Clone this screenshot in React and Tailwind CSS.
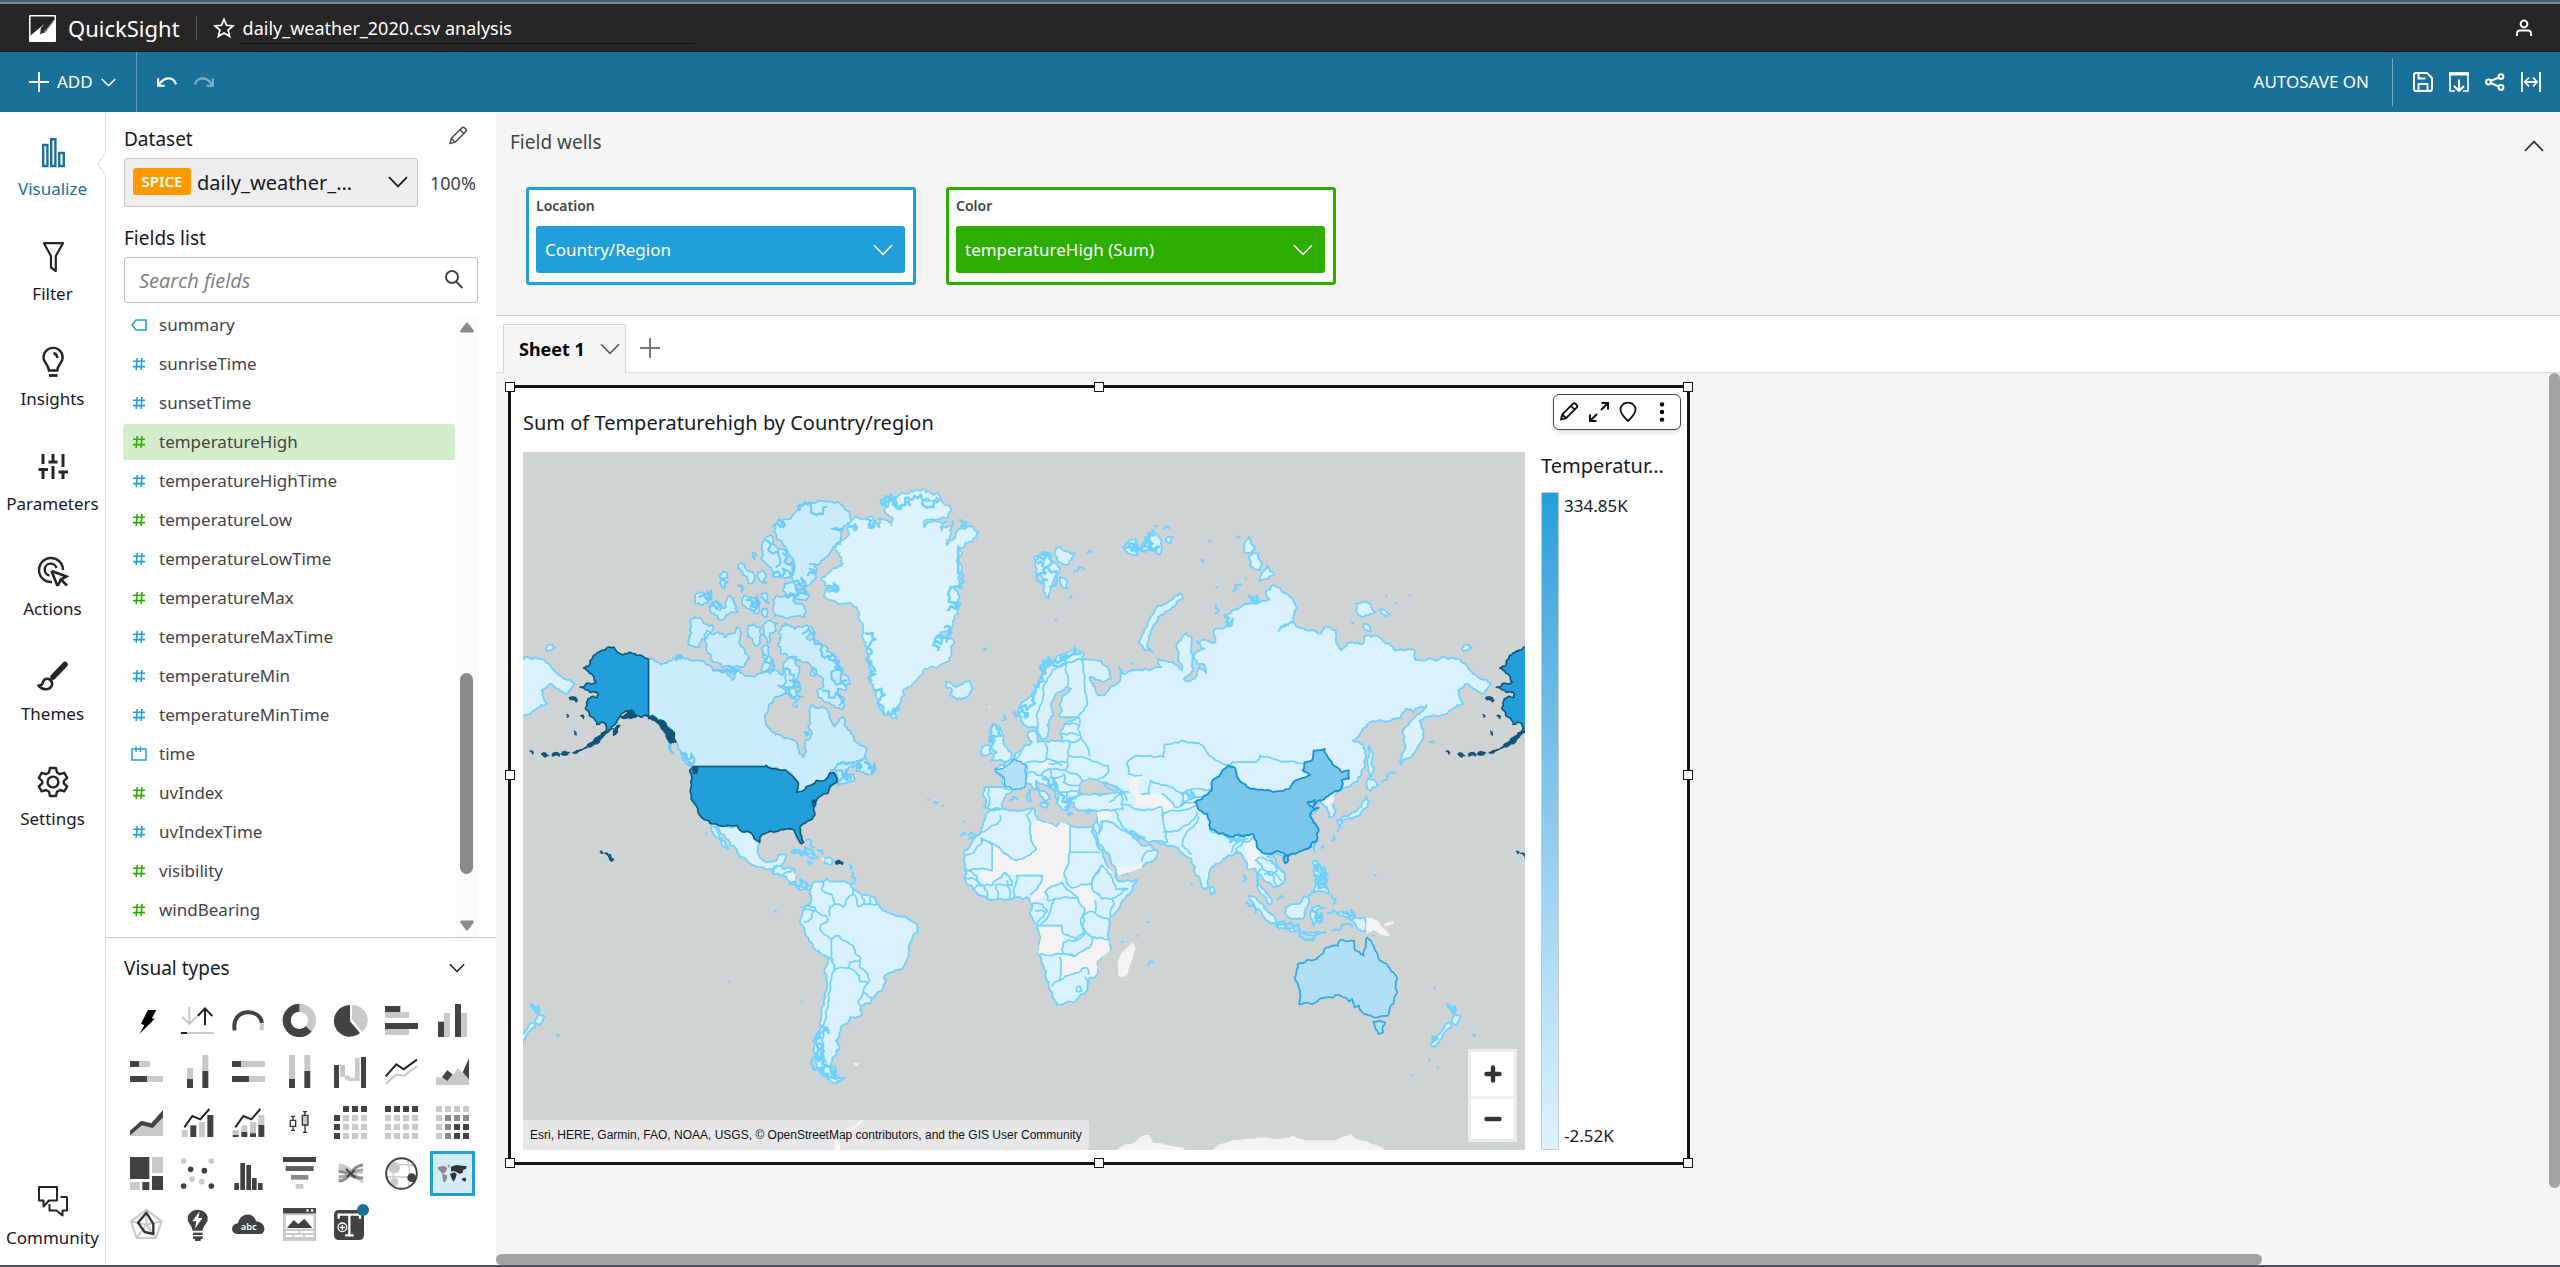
import React from "react";

/* ---------- Map drawing ---------- */

// Each sheet gives an origin and a scale for the coordinates that follow its letter.
const SHEETS = {
  a: [510, 440, 1 / 3, 1 / 3],
  b: [960, 440, 0.3699, 1 / 3],
  c: [510, 760, 1 / 3, 1 / 3],
  d: [960, 760, 0.4719, 1 / 3],
};

function parse(str) {
  let s = SHEETS.a;
  const out = [];
  for (const t of str.trim().split(/\s+/)) {
    if (SHEETS[t]) {
      s = SHEETS[t];
      continue;
    }
    const [x, y] = t.split(",").map(Number);
    out.push([s[0] + x * s[2], s[1] + y * s[3]]);
  }
  return out;
}

// Midpoint displacement gives coasts and borders their ragged course.
// Long segments that run exactly along a parallel or meridian stay straight.
function rough(points, amp, closed) {
  let seed = 7;
  const rnd = () => {
    seed = (seed * 16807) % 2147483647;
    return seed / 2147483647 - 0.5;
  };
  let pts = closed ? [...points, points[0]] : points;
  for (let k = 0; k < 3; k++) {
    const next = [pts[0]];
    for (let i = 1; i < pts.length; i++) {
      const [x0, y0] = pts[i - 1];
      const [x1, y1] = pts[i];
      const dx = x1 - x0;
      const dy = y1 - y0;
      const len = Math.hypot(dx, dy);
      const straight = len > 18 && (dx === 0 || dy === 0);
      if (len > 2.5 && !straight) {
        const r = rnd() * amp * Math.min(1, 9 / len);
        next.push([(x0 + x1) / 2 - dy * r, (y0 + y1) / 2 + dx * r]);
      }
      next.push(pts[i]);
    }
    pts = next;
  }
  return "M" + pts.map((p) => p[0].toFixed(1) + " " + p[1].toFixed(1)).join("L") + (closed ? "Z" : "");
}

const toPath = (list, amp, closed) =>
  list.map((s) => rough(parse(s), amp, closed)).join("");

const GREENLAND = [
  "a 1020,245 1050,235 1085,228 1090,245 1110,262 1105,235 1125,240 1145,255 1125,205 1140,185 1170,165 1205,150 1240,147 1285,160 1290,180 1240,180 1295,178 1302,192 1325,212 1310,235 1265,238 1242,250 1245,262 1265,245 1310,245 1295,272 1330,242 1325,280 1310,315 1350,265 1375,258 1405,275 1385,305 1350,325 1345,370 1355,400 1335,440 1350,470 1345,520 1325,570 1290,580 1330,600 1325,645 1300,670 1245,685 1235,705 1210,730 1185,745 1175,785 1160,835 1145,825 1120,815 1105,790 1090,750 1080,720 1085,690 1080,660 1070,620 1060,570 1050,520 1040,500 1020,487 985,492 950,475 945,450 985,440 945,435 935,415 970,385 1000,370 990,340 975,325 1005,295 1015,275",
];

const CANADA = [
  "a 417,657 440,665 470,670 490,658 515,645 540,660 570,662 600,675 620,690 650,695 668,720 680,685 700,700 740,705 780,700 800,690 820,705 830,670 840,665 865,690 860,720 840,745 805,735 830,760 805,770 785,790 770,820 768,848 785,872 815,885 840,895 860,903 865,925 880,950 890,935 885,905 900,895 907,875 895,860 900,835 898,810 905,795 935,800 955,815 960,835 975,858 1000,828 1010,860 1030,890 1060,915 1068,945 1035,965 990,968 975,985 960,998 955,1010 945,1020 920,1020 915,1028 890,1038 885,1048 860,1055 865,1045 865,1025 850,1008 830,990 815,990 790,985 770,975 765,978 555,978 545,970 525,955 505,925 500,905 475,860 440,832 417,828",
  "a 975,985 1000,968 1030,965 1015,985 1000,1000 1030,1000 1035,1015 1000,1030 985,1035 982,1010",
  "a 1040,985 1055,960 1065,945 1070,970 1088,980 1090,1000 1075,1003 1060,995 1040,992",
  "a 515,935 530,945 550,978 530,970",
  "a 478,912 486,912 492,940 482,930",
  "a 795,255 820,240 850,225 870,210 890,190 925,180 965,185 995,195 1020,215 1025,240 1000,265 965,265 1000,270 995,290 970,320 950,350 925,375 900,372 922,385 920,410 900,435 885,445 860,435 845,410 855,380 835,335 820,315 800,290 795,270",
  "a 770,290 790,290 800,320 830,340 825,360 845,375 850,405 825,415 790,410 775,375 755,355 758,310",
];

const CANADA_FJORDS = [
  "a 815,560 840,555 870,560 900,560 910,580 890,590 925,600 965,640 985,680 1015,710 1020,730 1005,750 985,745 1000,770 998,805 970,795 945,785 925,770 935,745 940,715 920,700 905,680 880,665 860,650 835,650 815,640 805,610 808,580",
  "a 585,600 600,575 625,575 650,590 670,580 680,560 692,565 690,600 700,620 720,655 700,680 665,680 635,680 610,665 600,640 590,625",
  "a 540,540 575,535 610,555 600,580 575,600 570,620 555,622 535,605 540,570",
  "a 715,570 735,550 750,560 752,610 735,615 715,590",
  "a 765,550 805,548 800,570 780,580 775,610 760,585",
  "a 760,620 780,620 790,660 775,690 755,690 760,650",
  "a 830,660 860,655 870,680 865,710 845,740 825,745",
  "a 835,760 850,740 880,770 850,775",
  "a 905,690 915,685 918,705 905,705",
  "a 852,790 862,785 865,798 855,800",
  "a 600,510 620,480 650,500 660,465 675,490 685,515 660,520 630,538 605,520",
  "a 555,490 575,455 605,450 600,475 580,495",
  "a 695,475 720,470 745,465 750,510 735,520 715,505 700,495",
  "a 755,460 775,465 780,490 765,480",
  "a 760,505 775,515 775,530 758,525",
  "a 790,480 820,470 850,460 895,460 890,480 850,482 885,500 885,530 830,535 795,530 790,505",
  "a 825,430 860,440 890,455 840,470 820,450",
  "a 685,375 705,372 730,395 735,420 720,430 700,405",
  "a 745,395 770,405 770,430 750,420",
  "a 630,405 655,398 655,410 635,415",
  "a 630,428 655,425 645,445",
  "a 728,340 740,345 735,358",
  "a 685,435 700,450 695,455",
];

const USA = [
  "a 300,620 320,630 350,640 385,645 400,648 417,657 417,828 385,826 365,815 345,815 330,830 318,850 300,870 280,890 250,905 265,890 290,870 288,850 275,845 262,852 255,835 240,825 228,805 232,785 245,770 265,770 262,755 240,755 225,745 212,740 235,728 260,725 250,705 232,690 222,683 240,675 250,655 270,635 285,630",
  "a 545,985 555,978 765,978 770,975 790,985 815,990 830,990 850,1008 865,1025 865,1045 860,1055 885,1048 890,1038 915,1028 920,1020 945,1020 955,1010 960,998 972,996 978,1005 982,1025 960,1040 955,1058 930,1068 920,1080 912,1100 915,1125 908,1135 880,1150 870,1160 875,1185 882,1205 875,1210 862,1190 855,1170 835,1165 810,1168 805,1173 780,1172 760,1180 750,1190 750,1205 738,1198 725,1178 712,1172 705,1175 690,1168 682,1155 645,1157 600,1147 600,1143 578,1133 565,1110 555,1090 545,1070 543,1045 547,1010 540,990",
];

const USA_DARK = [
  "a 417,828 440,832 460,840 475,860 495,885 500,905 485,908 470,890 455,865 440,845 417,835",
  "a 355,812 375,815 382,828 345,835 335,830",
  "a 300,872 312,865 270,905 215,930 190,937 235,912",
  "a 318,862 332,855 325,875 312,885",
  "a 180,772 205,780 200,785 183,778",
  "a 214,826 224,828 222,835",
  "a 172,823 178,828 175,831",
  "a 195,872 200,884 196,880",
  "a 553,980 560,980 560,1000 552,1000",
  "a 908,1080 918,1080 912,1100",
  "a 62,932 72,936 70,941",
  "a 97,940 118,946 108,950",
  "a 128,942 150,941 150,947 130,947",
  "a 155,941 180,936 175,943",
  "c 272,272 280,276 276,279",
  "c 284,278 298,284 304,282 313,296 306,302 298,288",
  "c 977,304 1000,306 998,312 980,311",
];

const LAND = [
  // Iceland
  "a 1308,725 1325,730 1340,740 1360,730 1380,722 1390,745 1370,770 1340,778 1320,765 1325,745 1308,740",
  // Mexico and Central America
  "c 600,188 645,197 682,196 690,207 705,215 712,212 725,218 738,240 750,245 745,270 750,290 770,305 800,300 805,285 828,282 825,305 815,315 820,325 855,325 858,345 855,365 870,378 890,378 905,375 900,388 870,388 845,370 830,350 815,345 790,340 780,325 745,318 715,305 688,285 680,265 650,235 620,198 612,198 625,215 640,240 658,265 640,258 620,230",
  // Caribbean
  "c 845,274 870,267 900,278 925,290 905,292 880,280",
  "c 945,292 970,298 968,310 945,308",
  "c 893,303 908,307 900,311",
  // South America
  "c 905,378 925,362 950,355 960,362 1020,370 1030,385 1055,402 1095,410 1110,440 1150,460 1190,470 1222,490 1225,515 1198,550 1190,600 1175,625 1145,635 1122,650 1120,680 1085,715 1080,730 1055,735 1055,765 1020,770 1015,790 998,795 990,830 978,840 990,860 975,885 965,905 965,930 985,950 1005,950 980,965 945,945 922,920 915,880 918,830 930,790 935,750 947,710 950,650 957,590 915,565 895,530 872,490 880,450 900,430 900,400",
  // Eurasia
  "b 300,630 335,640 330,660 370,660 405,695 408,715 385,725 350,710 365,740 372,765 390,765 405,740 430,725 430,680 440,700 470,690 500,685 545,680 535,655 575,665 600,690 590,660 585,625 600,590 610,578 625,590 628,650 630,690 605,718 622,722 640,700 645,680 665,698 655,670 640,670 635,640 660,625 640,605 665,600 690,605 685,570 725,555 715,530 760,498 790,490 780,465 800,488 835,478 825,455 845,435 870,455 890,468 910,500 900,540 860,572 895,545 910,560 945,570 975,580 985,560 1015,570 1015,600 1030,630 1045,612 1085,612 1090,590 1130,590 1160,610 1180,630 1225,628 1228,658 1290,660 1300,650 1340,655 1370,680 1400,710 1434,730 1415,760 1385,745 1370,730 1345,750 1360,790 1330,805 1295,828 1255,830 1240,840 1250,880 1235,920 1205,955 1190,972 1200,930 1195,880 1215,845 1245,815 1260,795 1240,800 1225,815 1205,805 1190,835 1150,845 1105,848 1080,880 1060,900 1088,915 1095,950 1085,1000 1050,1040 1030,1045 1020,1055 1000,1075 1015,1110 1010,1128 995,1130 990,1100 975,1083 955,1090 938,1085 945,1095 968,1100 945,1120 960,1150 968,1165 965,1195 940,1225 900,1238 d 690,285 655,285 650,290 665,310 688,345 685,365 665,380 655,365 640,350 632,340 628,360 640,385 655,410 660,430 650,425 635,395 630,365 628,335 620,320 610,325 600,295 590,275 578,285 555,300 530,325 525,380 515,385 500,345 490,295 475,285 460,260 430,250 400,245 385,235 370,215 360,210 370,235 385,255 400,252 410,265 420,275 410,300 385,320 350,340 330,345 325,315 305,270 290,230 283,200 290,180 292,160 290,150 250,150 240,140 235,115 258,100 295,105 330,95 338,88 308,65 295,70 290,62 275,70 280,85 262,85 250,105 235,115 225,150 215,145 205,120 195,80 175,70 160,62 165,85 185,100 190,115 180,130 175,110 155,85 140,65 125,80 110,88 100,100 88,145 70,150 50,142 55,115 51,80 b 120,1040 115,1010 95,985 120,975 145,955 165,930 175,915 195,905 183,880 200,870 210,885 210,905 240,905 275,900 270,880 290,845 320,830 270,830 272,800 275,770 300,745 290,738 270,755 250,780 250,810 240,840 240,870 235,890 220,895 210,860 185,862 165,840 160,800 190,770 215,720 235,680 265,645",
  // British Isles
  "b 85,960 130,965 140,940 125,920 115,880 100,855 90,850 80,870 95,900 85,925 100,935",
  "b 60,920 82,915 85,940 58,945",
  // Mediterranean islands
  "b 215,1092 240,1090 235,1102",
  "b 185,1050 192,1048 192,1082 184,1082",
  "b 290,1118 305,1120 295,1124",
  "b 340,1112 360,1110 345,1120",
  // Arctic islands
  "b 200,350 240,345 250,365 270,385 265,400 250,430 240,475 225,450 225,415 205,400",
  "b 255,340 270,320 310,340 290,375 265,365",
  "b 270,410 290,425 290,445 275,440",
  "b 440,320 475,295 480,345 455,340",
  "b 490,330 510,290 520,270 545,300 540,345 515,330",
  "b 555,300 575,290 570,310",
  "b 765,335 780,290 798,320 785,338",
  "b 780,350 805,340 815,365 808,390 785,380",
  "b 810,425 830,375 850,402",
  "b 1070,490 1110,492 1122,515 1085,530 1070,515",
  "b 1130,508 1162,522 1150,528",
  "b 1090,550 1108,562 1110,572 1092,568",
  "b 595,460 602,475 575,500 560,512 535,530 515,580 505,620 520,635 500,630 482,605 495,580 510,540 535,495 570,480",
  "b 1355,625 1372,612 1382,622 1360,632",
  // Sakhalin and Japan
  "b 1105,915 1112,960 1118,982 1108,1010 1100,970",
  "b 1102,1012 1130,1035 1108,1052 1098,1040",
  "b 1098,1068 1100,1100 1080,1125 1035,1140 1030,1132 1065,1115 1085,1095",
  "b 1018,1138 1032,1145 1026,1162",
  "b 955,1215 962,1205 958,1235",
  // Africa
  "d 65,150 100,148 155,143 160,165 165,180 195,190 205,200 215,185 235,195 265,200 283,197 280,215 300,270 320,335 335,362 375,358 365,390 340,430 318,470 315,535 318,570 290,600 290,640 272,655 270,690 245,722 205,732 195,710 182,650 165,580 172,530 163,490 148,460 152,430 145,410 115,410 60,415 35,395 10,350 8,300 10,270 35,225 50,185",
  // South and southeast Asia islands
  "d 530,378 540,395 532,402",
  "d 612,405 640,430 665,465 670,490 650,480 625,440",
  "d 668,495 700,502 740,515 775,515 740,522 700,512",
  "d 688,440 715,430 728,405 738,415 735,440 725,475 700,475 688,460",
  "d 745,440 772,442 752,455 768,485 755,475 750,495 742,470",
  "d 748,302 758,305 755,330 770,350 750,340",
  "d 745,392 738,405 752,375 772,365 780,400 766,392",
  "d 800,455 830,465 858,470 860,515 840,500 830,480",
  // New Zealand
  "d 1030,730 1045,755 1060,765 1050,795 1040,780 1045,760",
  "d 1035,785 1040,800 1020,830 1005,858 995,850 1010,825",
];

const ISLETS = [
  "c 890,238 905,248 912,262", "c 925,268 938,280", "c 1020,312 1022,325", "c 1028,335 1026,370",
  "c 795,452 800,453", "c 658,662 660,662", "c 875,722 877,722", "c 145,823 148,824",
  "a 1422,630 1430,625", "a 1253,1078 1256,1078", "a 1272,1087 1282,1088", "a 1298,1096 1300,1096",
  "a 1360,1143 1362,1143", "a 1352,1184 1368,1182", "a 1376,1184 1390,1180",
  "a 588,1178 591,1180", "b 672,302 678,302", "b 748,291 755,292", "b 652,360 658,365",
  "b 345,338 356,335", "b 308,395 335,388", "b 298,475 302,468", "b 257,538 260,538",
  "b 66,628 72,625", "b 550,265 565,264", "b 525,258 532,262", "b 690,495 690,520", "b 738,455 760,435",
  "b 692,441 695,442", "b 770,415 772,416", "b 462,668 466,672", "b 1150,468 1152,469", "b 1213,465 1215,465",
  "b 1176,488 1178,488", "b 1268,905 1280,908", "b 1140,1025 1175,998", "b 1058,545 1062,550",
  "b 1022,1165 1020,1172", "b 1010,1185 1004,1200", "b 980,1215 976,1222", "b 120,822 115,840",
  "b 85,870 80,900", "b 135,1080 155,1076", "d 600,342 601,362",
  "d 605,425 625,455", "d 672,415 685,412", "d 785,402 790,430", "d 778,458 798,462", "d 790,510 830,495",
  "d 878,344 880,345", "d 397,484 399,485", "d 375,525 376,526", "d 342,544 344,545", "d 397,612 409,606",
  "d 1003,680 1005,681", "d 993,896 995,900", "d 1010,920 1012,920", "d 955,944 957,944", "d 1086,822 1090,825",
  "d 489,370 491,371", "d 875,524 876,524",
];

// Heavily indented coasts read as thick bands at this scale.
const BANDS = [
  "c 938,795 932,830 925,850 925,885 935,920 955,940 980,955", "c 922,850 920,890 935,930", "c 950,915 965,940",
  "a 1120,195 1150,182 1195,172", "a 1345,320 1345,400 1335,440 1340,500", "a 1305,560 1300,590 1285,630",
  "a 1068,580 1085,630 1090,680 1085,720", "a 1130,200 1160,190 1180,195", "a 1095,750 1115,795 1150,820 1165,800",
  "a 1020,260 1035,270", "a 1070,235 1078,262", "a 1270,615 1310,605", "a 1315,510 1345,505", "a 950,445 980,455",
  "a 1200,195 1240,182 1280,182", "a 1350,240 1355,260",
  "b 165,830 165,800 195,765 220,710 240,675 275,645 325,640", "b 170,815 175,830", "b 225,690 250,665 290,645",
  "b 455,310 470,330", "b 445,325 478,335", "b 510,320 525,285 530,335", "b 500,335 520,310 538,320",
  "b 210,370 215,400 235,420", "b 205,360 245,355", "b 240,350 245,440",
  "d 750,345 770,370", "d 752,320 762,345 776,385",
  "d 755,330 768,350 772,375", "d 672,498 720,514 760,520", "d 745,450 758,485", "d 810,458 830,475",
  "b 85,860 95,890 90,910", "b 270,1060 285,1100", "b 225,1015 255,1050", "b 780,470 795,490", "b 715,525 720,555",
  "c 850,275 910,288", "c 840,368 890,385", "b 600,1060 625,1075", "d 572,245 600,240",
  "d 1033,738 1042,755", "d 1000,845 1010,835",
];

const CANADA_BANDS = [
  "a 880,580 930,610 970,660 1010,720", "a 940,750 990,795", "a 515,940 545,970", "a 610,690 690,690",
  "a 820,340 840,400", "a 790,400 840,412", "a 1065,965 1085,995", "a 990,1020 1020,1020", "a 830,470 890,465",
  "a 710,480 740,500", "a 760,640 780,690", "a 600,500 630,510", "a 570,470 600,480", "a 985,990 1000,1010",
  "a 885,875 890,885", "a 870,210 905,205 950,200", "a 770,300 800,380", "a 500,660 515,655",
  "a 820,690 850,740 870,770", "a 960,650 975,690 1005,735", "a 850,425 880,440", "a 895,405 915,400",
  "a 640,695 670,700", "a 1030,980 1050,985", "a 720,475 725,510", "a 840,720 860,755", "a 790,258 820,262",
];

const BORDERS = [
  // South America
  "c 940,360 935,385 965,400 975,430 960,440 960,465", "c 900,435 925,455 950,465 955,480 935,490 932,510 945,522 965,535",
  "c 965,535 990,525 1000,540 1030,555 1035,575 1053,590 1050,620 1075,640 1080,660 1060,690 1085,712",
  "c 965,535 965,600 975,628 965,660 955,700 955,740 945,780 940,830 940,880 950,905", "c 957,590 970,600",
  "c 975,628 1015,620 1020,605 1050,600", "c 1015,622 1050,645 1050,662 1078,665", "c 1060,690 1045,720 1055,735",
  "c 975,430 1000,440 1008,418 1030,400 1030,385", "c 1030,400 1045,437 1060,430 1100,432", "c 1055,405 1062,430", "c 1080,410 1078,432",
  "c 880,450 915,450 905,475 885,485", "c 875,440 905,440",
  "c 790,325 800,315 815,315", "c 820,345 830,335 855,325", "c 790,340 800,320",
  // Europe
  "b 210,860 215,800 225,740 250,690 285,670 325,655", "b 285,670 290,740", "b 325,655 335,700 345,790 320,830",
  "b 320,830 320,870 345,920 350,945", "b 295,945 370,965 400,975 400,1000 375,1015", "b 230,910 235,955 290,965 295,905",
  "b 175,970 215,965 235,955", "b 165,930 150,955 180,975", "b 290,965 285,990 315,1000 330,1020", "b 280,1000 280,1025 320,1035",
  "b 275,905 300,905 325,895", "b 275,880 320,885", "b 285,850 320,855", "b 180,1000 200,995 215,1005 240,985 285,990",
  "b 240,985 245,1010 280,1005", "b 245,1010 260,1050 285,1055 320,1050", "b 265,1050 260,1090", "b 215,1005 240,1020 250,1045",
  "b 290,1055 285,1110", "b 180,975 175,1020 170,1040", "b 78,1045 75,1100", "b 120,1045 165,1048", "b 240,970 275,975",
  // Caucasus and the Middle East
  "b 385,1030 430,1045 455,1055", "b 425,1055 440,1075 440,1105 375,1112", "b 430,1045 450,1080", "b 405,1085 440,1060",
  "b 435,1090 470,1105 545,1100 550,1150 560,1205 520,1200", "b 545,1125 580,1110 640,1095", "b 640,1115 620,1150 590,1170 550,1175",
  "b 645,1130 610,1180 600,1215 625,1240", "b 415,1108 430,1140 455,1175 485,1195", "b 380,1145 410,1145 460,1180 500,1190",
  "b 370,1130 375,1180", "b 385,1145 375,1175", "d 385,300 400,270 410,268",
  // Central Asia
  "b 490,1005 455,1000 450,970 475,945 550,950 550,915 600,900 655,915 680,950 725,975",
  "b 680,1045 640,1045 600,1060 570,1040 515,1020 510,1060 490,1060", "b 545,1060 580,1100 610,1085", "b 600,1060 600,1080 635,1085",
  "b 595,1095 640,1070 680,1050", "b 725,975 750,965 800,965 810,945 860,960 925,970",
  "b 675,1170 730,1195 775,1195 745,1225 750,1240", "d 575,235 585,250 575,275", "d 585,240 605,245 620,228",
  "d 625,300 640,290 660,300 672,330 655,345", "d 650,270 670,305 685,335", "d 632,335 640,325 665,335 680,360",
  "d 645,340 665,350 670,375", "d 628,300 640,325",
  // Africa
  "d 85,165 80,190 55,210 20,235", "d 45,232 120,300 162,265 150,240 150,190 140,165 158,143", "d 45,235 45,250 30,275 10,285",
  "d 45,240 68,250 68,330 30,325 10,330", "d 233,195 233,275 295,275", "d 233,275 220,340 235,380 275,370 300,315",
  "d 300,315 285,345 280,385 300,415 320,415 355,385 330,385 320,345 300,315", "d 320,415 325,435 318,465", "d 285,420 285,455 315,475",
  "d 260,460 285,455", "d 260,465 260,500 280,530 315,535", "d 200,415 250,412 265,450 255,480 260,520 245,535 220,520 215,495 165,495 185,470 195,430 200,415",
  "d 180,395 215,365 240,400 250,412", "d 180,395 185,418 200,415", "d 115,410 118,370 120,345 175,345 170,370 150,402",
  "d 75,375 80,412", "d 100,360 105,412", "d 50,375 58,410", "d 12,330 35,345 45,375 70,372", "d 70,372 75,360 95,335 110,360 110,375 75,375",
  "d 10,352 35,360", "d 28,385 45,375", "d 150,432 175,430 185,450 165,485", "d 160,450 180,455", "d 218,545 245,540 265,515 280,530 275,560 245,585 218,580 218,545",
  "d 165,582 245,585", "d 212,590 210,660 195,675", "d 210,660 240,640 260,622 270,622 272,640", "d 265,650 270,670", "d 247,680 255,678 258,690 248,693 247,680",
];

const NO_DATA = [
  // Libya, Niger, Chad, Mali
  "d 162,178 205,200 213,183 233,195 232,275 215,360 180,392 175,410 150,428 150,402 172,370 175,345 120,345 95,335 75,360 50,362 40,330 68,330 68,250 120,300 162,265 150,240 152,200",
  "d 232,375 270,372 285,395 285,455 265,455 250,412 240,400",
  "d 303,310 330,345 318,340 300,322",
  "d 165,497 215,500 220,520 218,580 165,580 172,530",
  "d 215,590 245,585 278,555 283,540 315,538 318,570 290,600 290,640 272,650 268,622 245,635 212,660",
  "d 365,545 372,565 355,640 345,650 335,645 333,610 340,580",
  "d 28,375 38,375 38,392",
  "d 330,318 360,320 385,305 385,322 335,347",
  // Turkmenistan and the Caspian
  "b 455,1015 485,1005 490,1020 475,1040 495,1062 540,1060 580,1100 560,1117 500,1095 470,1102 475,1075 460,1050",
  "b 600,1085 635,1090 630,1098 600,1100",
  "b 370,1115 415,1108 405,1130 385,1145 370,1140",
  "b 212,965 235,960 250,972 230,980",
  "b 985,1073 1020,1050 1010,1068 1008,1088 990,1092",
  "d 602,250 612,235 625,245 635,280 640,292 625,300 625,320 610,325",
  "d 640,285 655,295 665,320",
  "d 860,470 885,480 895,500 912,525 890,522 875,508 860,520",
  "d 897,492 918,480 918,488 900,497",
  "c 832,350 858,338 858,362 845,365",
  "c 932,292 945,293 943,303",
  "c 1030,906 1050,908 1040,917",
  "a 1436,796 1442,800 1438,804",
  "c 1055,1076 1058,1082 1025,1108 992,1135 990,1170 975,1170 975,1140 1005,1105 1030,1098",
  "d 330,1170 350,1150 370,1145 385,1125 400,1122 410,1145 475,1160 475,1170",
  "d 533,1170 550,1150 575,1138 640,1130 670,1135 705,1125 730,1138 795,1138 828,1118 835,1132 860,1140 895,1160 898,1170",
];

const CHINA = [
  "b 725,975 745,990 755,1020 785,1045 845,1055 890,1045 900,1025 945,1005 925,990 930,965 950,960 955,930 985,925 1005,970 1030,995 1050,990 1050,1015 1030,1020 1030,1045 1000,1060 975,1080 955,1095 958,1078 938,1085 945,1097 968,1102 945,1120 960,1150 968,1165 965,1195 940,1225 900,1238 880,1245 860,1232 830,1240 805,1225 800,1200 790,1180 770,1185 740,1188 700,1180 675,1165 668,1120 650,1110 635,1085 680,1050 680,1025 705,1000",
  "d 685,290 695,285 695,300 688,308",
];

const AUSTRALIA = [
  "d 715,610 755,595 775,560 800,555 805,538 835,540 835,565 855,585 862,530 870,540 885,590 905,615 925,650 925,690 910,740 905,765 880,770 855,760 845,735 835,740 830,715 825,722 800,702 770,712 745,730 718,730 720,690 708,650",
  "d 875,783 900,785 895,815 885,818",
];

const FRANCE = [
  "b 145,957 180,977 178,1000 175,1040 148,1047 122,1038 118,1010 95,987 120,980",
];

const BLACK_SEA = [
  "b 322,1050 330,1020 350,1012 375,1022 390,1032 420,1058 375,1062 330,1062",
];

const PATHS = {
  land: toPath(LAND, 0.42, true),
  greenland: toPath(GREENLAND, 0.6, true),
  canada: toPath(CANADA, 0.5, true),
  canadaFjords: toPath(CANADA_FJORDS, 0.7, true),
  canadaBands: toPath(CANADA_BANDS, 1.6, false),
  usa: rough(parse(USA[0]), 0.5, true) + rough(parse(USA[1]), 0.25, true),
  usaDark: toPath(USA_DARK, 0.5, true),
  islets: toPath(ISLETS, 0.8, false),
  bands: toPath(BANDS, 1.6, false),
  borders: toPath(BORDERS, 0.35, false),
  noData: toPath(NO_DATA, 0.15, true),
  china: toPath(CHINA, 0.35, true),
  australia: toPath(AUSTRALIA, 0.35, true),
  france: toPath(FRANCE, 0.35, true),
  blackSea: toPath(BLACK_SEA, 0.35, true),
};

function WorldMap() {
  return (
    <svg
      viewBox="523 452 1002 697"
      preserveAspectRatio="xMidYMid slice"
      className="block h-full w-full bg-[#cfd3d4]"
      role="img"
      aria-label="World map of temperatureHigh by country"
    >
      <defs>
        <g id="world" strokeLinejoin="round" strokeLinecap="round">
          <path d={PATHS.land} fill="#daf2ff" stroke="#70d1ff" strokeWidth="1.8" />
          <path d={PATHS.noData} fill="#f3f3f3" />
          <path d={PATHS.borders} fill="none" stroke="#70d1ff" strokeWidth="1.7" />
          <path d={PATHS.blackSea} fill="#cfd3d4" stroke="#70d1ff" strokeWidth="1.4" />
          <path d={PATHS.islets} fill="none" stroke="#70d1ff" strokeWidth="2" />
          <path d={PATHS.greenland} fill="#ddf4ff" stroke="#70d1ff" strokeWidth="1.6" />
          <path d={PATHS.bands} fill="none" stroke="#70d1ff" strokeWidth="2.6" />
          <path d={PATHS.canada} fill="#cbecfd" stroke="#6ccaf8" strokeWidth="1.6" />
          <path d={PATHS.canadaFjords} fill="#cbecfd" stroke="#6ccaf8" strokeWidth="1.6" />
          <path d={PATHS.canadaBands} fill="none" stroke="#6ccaf8" strokeWidth="2.2" />
          <path d={PATHS.france} fill="#b3e2f8" stroke="#3fb2ea" strokeWidth="1.3" />
          <path d={PATHS.australia} fill="#b0dff5" stroke="#2fa8e4" strokeWidth="1.7" />
          <path d={PATHS.china} fill="#7bc7ec" stroke="#1292d2" strokeWidth="1.8" />
          <path d={PATHS.usa} fill="#219fda" stroke="#0f5578" strokeWidth="1.6" />
          <path d={PATHS.usaDark} fill="#0f5578" stroke="#0f5578" strokeWidth="1.2" />
        </g>
      </defs>
      <use href="#world" />
      <use href="#world" x="-915" />
      <use href="#world" x="915" />
    </svg>
  );
}

/* ---------- Small icons ---------- */

function Svg({ box = "0 0 24 24", className, sw = 2, children, ...rest }) {
  return (
    <svg viewBox={box} className={className} fill="none" stroke="currentColor" strokeWidth={sw} aria-hidden="true" {...rest}>
      {children}
    </svg>
  );
}

const Chevron = ({ className, sw = 1.6 }) => (
  <Svg box="0 0 20 12" className={className} sw={sw}>
    <path d="M1 1.2 L10 10.4 L19 1.2" />
  </Svg>
);

const Logo = () => (
  <svg viewBox="0 0 27 27" className="h-[27px] w-[27px]" aria-hidden="true">
    <rect width="27" height="27" rx="1" fill="#fff" />
    <path d="M1.5 1.5H25.5V4L15.5 17L14.8 9.5L1.5 20.5Z" fill="#262626" />
    <path d="M11.8 13 L11.2 19.5 L15.5 17 L15.2 9.8Z" fill="#262626" />
    <path d="M14.8 8.5 L14.6 17.5 L16 17.5 L25.5 4.5" fill="none" stroke="#262626" strokeWidth="0.6" />
  </svg>
);

const Star = () => (
  <Svg className="h-[22px] w-[22px] text-white" sw={1.9}>
    <path d="M12 2.5 L14.8 9 L21.8 9.7 L16.5 14.2 L18.1 21.2 L12 17.5 L5.9 21.2 L7.5 14.2 L2.2 9.7 L9.2 9Z" />
  </Svg>
);

const User = () => (
  <Svg box="0 0 16 18" className="h-[18px] w-4 text-white" sw={2}>
    <circle cx="8" cy="5" r="3.4" />
    <path d="M1 17 V14.5 Q1 11.5 4 11.5 H12 Q15 11.5 15 14.5 V17" />
  </Svg>
);

const Undo = ({ className }) => (
  <Svg box="0 0 22 12" className={className} sw={2.2}>
    <path d="M1.2 2.2 V10 H8 M2 9 C7 0.5 17 -0.5 20 8.5" />
  </Svg>
);

const Save = () => (
  <Svg box="0 0 20 20" className="h-5 w-5" sw={1.9}>
    <path d="M1 3 Q1 1 3 1 H14 L19 6 V17 Q19 19 17 19 H3 Q1 19 1 17Z M5.5 1 V6.5 H12.5 M5.5 19 V12 H14.5 V19" />
  </Svg>
);

const Export = () => (
  <Svg box="0 0 20 20" className="h-5 w-5" sw={1.6}>
    <path d="M6 19 H1 V1 H19 V19 H14" />
    <path d="M0 2 H20" strokeWidth="3" />
    <path d="M10 7.5 V18.5 M5 14 L10 19 L15 14" strokeWidth="2" />
  </Svg>
);

const Share = () => (
  <Svg box="0 0 20 20" className="h-5 w-5" sw={2}>
    <circle cx="3.5" cy="10" r="2.4" />
    <circle cx="16" cy="4.6" r="2.4" />
    <circle cx="16" cy="15.4" r="2.4" />
    <path d="M5.7 9 L13.8 5.5 M5.7 11 L13.8 14.5" />
  </Svg>
);

const FitWidth = () => (
  <Svg box="0 0 20 20" className="h-5 w-5" sw={1.8}>
    <path d="M1 0 V20 M19 0 V20 M4 10 H16 M8 5.5 L3.8 10 L8 14.5 M12 5.5 L16.2 10 L12 14.5" />
  </Svg>
);

const Pencil = ({ className, sw = 1.7 }) => (
  <Svg box="0 0 20 20" className={className} sw={sw} strokeLinejoin="round">
    <path d="M1.5 18.5 L3 13 L14 2 Q15.5 0.6 17 2 L18 3 Q19.4 4.5 18 6 L7 17 Z M12 4 L16 8 M3 13 L7 17" />
  </Svg>
);

const NAV_ICONS = {
  Visualize: (
    <Svg box="0 0 32 32" className="h-8 w-8" sw={2.4}>
      <path d="M6.2 9 H10.4 V30 H6.2Z M14.2 3.2 H18.4 V30 H14.2Z M22.2 17 H26.8 V30 H22.2Z" />
    </Svg>
  ),
  Filter: (
    <Svg box="0 0 32 32" className="h-8 w-8" sw={2.2} strokeLinejoin="round">
      <path d="M7 2.2 H26 L18.8 15 V30 L14 26.5 V15Z" />
    </Svg>
  ),
  Insights: (
    <Svg box="0 0 32 32" className="h-8 w-8" sw={2.4}>
      <path d="M12 24.5 Q11.5 21 9 17.5 Q6.5 14 6.5 11.5 A9.6 9.6 0 0 1 25.7 11.5 Q25.7 14 23.2 17.5 Q20.7 21 20.2 24.5Z" />
      <path d="M12 29.5 H20.5" strokeWidth="2.8" />
      <path d="M16.5 7 Q20 8 20.5 12" />
    </Svg>
  ),
  Parameters: (
    <Svg box="0 0 32 32" className="h-8 w-8" sw={3}>
      <path d="M6 3 V13 M1.5 18.5 H11 M6 18.5 V28 M16 3 V11 M11.5 11 H20.5 M16 15 V28 M26 3 V16 M21.5 21 H31 M26 21 V28" />
    </Svg>
  ),
  Actions: (
    <Svg box="0 0 32 32" className="h-8 w-8" sw={2.4}>
      <path d="M15 26 A12 12 0 1 1 26 14" />
      <path d="M12.5 19.5 A6 6 0 1 1 19.5 12" />
      <path d="M14.5 15 L29.5 20.5 L24 23.5 L30 29.5 M24 23.5 L20.5 30 Z" strokeWidth="2.6" />
      <path d="M14.5 15 L20.5 30" strokeWidth="2.6" />
    </Svg>
  ),
  Themes: (
    <svg viewBox="0 0 32 32" className="h-8 w-8" aria-hidden="true">
      <path d="M16 16 L28 3.5" stroke="currentColor" strokeWidth="5.5" strokeLinecap="round" />
      <path d="M1.5 24.5 Q5 25 6 21 Q7.5 16.8 12 18 Q16 20 14.8 24.5 Q13 28.5 8.5 28.3 Q4 28 1.5 24.5Z" fill="none" stroke="currentColor" strokeWidth="2.6" strokeLinejoin="round" />
    </svg>
  ),
  Settings: (
    <Svg box="0 0 32 32" className="h-8 w-8" sw={2.4} strokeLinejoin="round">
      <circle cx="16" cy="16" r="5.4" />
      <path d="M13 2 H19 L20 6.5 L23 8.2 L27.3 6.8 L30.2 11.8 L26.8 15 V17.4 L30.2 20.5 L27.3 25.4 L23 24 L20 25.7 L19 30 H13 L12 25.7 L9 24 L4.7 25.4 L1.8 20.5 L5.2 17.4 V15 L1.8 11.8 L4.7 6.8 L9 8.2 L12 6.5Z" />
    </Svg>
  ),
  Community: (
    <Svg box="0 0 32 32" className="h-8 w-8" sw={2} strokeLinejoin="round">
      <path d="M2 2 H20 V15.5 H12 L6.5 21.5 V15.5 H2Z" />
      <path d="M23.5 12 H30 V25.5 H25.5 V30.5 L19.5 25.5 H12.5 V19" />
    </Svg>
  ),
};

function NavItem({ name, active }) {
  return (
    <button
      type="button"
      aria-current={active ? "page" : undefined}
      className={
        active
          ? "flex h-[105px] w-full flex-col items-center gap-[9px] text-[#19719a]"
          : "flex h-[105px] w-full flex-col items-center gap-[9px] text-[#232529]"
      }
    >
      {NAV_ICONS[name]}
      <span className={active ? "text-[17px] leading-6" : "text-[17px] leading-6 text-[#16191f]"}>{name}</span>
    </button>
  );
}

/* ---------- Fields ---------- */

const FIELDS = [
  ["summary", "text"],
  ["sunriseTime", "dim"],
  ["sunsetTime", "dim"],
  ["temperatureHigh", "measure", true],
  ["temperatureHighTime", "dim"],
  ["temperatureLow", "measure"],
  ["temperatureLowTime", "dim"],
  ["temperatureMax", "measure"],
  ["temperatureMaxTime", "dim"],
  ["temperatureMin", "dim"],
  ["temperatureMinTime", "dim"],
  ["time", "date"],
  ["uvIndex", "measure"],
  ["uvIndexTime", "dim"],
  ["visibility", "measure"],
  ["windBearing", "measure"],
];

function FieldIcon({ kind }) {
  if (kind === "text")
    return (
      <Svg box="0 0 16 16" className="h-4 w-4 text-[#219fda]" sw={1.6}>
        <path d="M5 3 H15 V13 H5 L1 8Z" />
      </Svg>
    );
  if (kind === "date")
    return (
      <Svg box="0 0 16 16" className="h-4 w-4 text-[#219fda]" sw={1.5}>
        <path d="M1 3 H15 V14 H1Z M5 0.5 V6 M9.5 0.5 V6" />
      </Svg>
    );
  return (
    <Svg
      box="0 0 16 16"
      className={kind === "measure" ? "h-4 w-4 text-[#2cad00]" : "h-4 w-4 text-[#219fda]"}
      sw={1.6}
    >
      <path d="M6.2 2 L5.2 14 M11 2 L10 14 M2 5.2 H14 M2 10.6 H14" />
    </Svg>
  );
}

/* ---------- Visual type icons, drawn on a 99 unit square ---------- */

const D = "#424242";
const L = "#c9c9c9";
const M = "#8a8a8a";
const R = (x, y, w, h, f, k) => <rect key={k} x={x} y={y} width={w} height={h} fill={f} />;

function cells(colour) {
  const out = [];
  for (let r = 0; r < 4; r++)
    for (let c = 0; c < 4; c++) {
      const f = colour(r, c);
      if (f) out.push(R(c * 27, r * 27, 18, 18, f, r + "-" + c));
    }
  return out;
}

const HEAT = [
  [L, L, L, L],
  [L, M, M, M],
  [L, M, D, D],
  [L, M, D, D],
];

const VISUALS = [
  ["AutoGraph", <path d="M54 18H79L66 42L74 45L28 90L43 64L33 59Z" fill="#000" />],
  ["KPI", <g fill="none" strokeWidth="6"><path d="M25 9V60M3 38L25 60L47 38" stroke={L} /><path d="M72 64V14M50 36L72 13L94 36" stroke="#222" /><path d="M0 87H18" stroke="#222" /><path d="M18 87H99" stroke={L} /></g>],
  ["Gauge", <g fill="none" strokeWidth="12"><path d="M8 79C2 45 22 25 49 25C74 25 87 40 90 57" stroke={D} /><path d="M90 59Q91 70 88 79" stroke={L} /></g>],
  ["Donut chart", <g fill="none" strokeWidth="24"><circle cx="49" cy="49" r="38" stroke={L} /><path d="M49 11A38 38 0 1 0 77 75" stroke={D} /></g>],
  ["Pie chart", <g><path d="M48 3V52L78 87A47.6 47.6 0 1 1 48 3Z" fill={D} /><path d="M54 3V46L85 84A46 46 0 0 0 54 3Z" fill={L} /></g>],
  ["Horizontal bar chart", <g>{R(0, 6, 46, 18, D)}{R(0, 24, 72, 18, L)}{R(0, 57, 99, 18, D)}{R(0, 75, 72, 18, L)}</g>],
  ["Vertical bar chart", <g>{R(6, 53, 18, 46, D)}{R(24, 27, 18, 72, L)}{R(57, 0, 18, 99, D)}{R(75, 27, 18, 72, L)}</g>],
  ["Horizontal stacked bar", <g>{R(0, 18, 27, 18, D)}{R(27, 18, 33, 18, L)}{R(0, 63, 51, 18, D)}{R(51, 63, 48, 18, L)}</g>],
  ["Vertical stacked bar", <g>{R(18, 39, 18, 33, L)}{R(18, 72, 18, 27, D)}{R(64, 0, 18, 48, L)}{R(64, 48, 18, 51, D)}</g>],
  ["Horizontal 100% bar", <g>{R(0, 18, 27, 18, D)}{R(27, 18, 72, 18, L)}{R(0, 63, 51, 18, D)}{R(51, 63, 48, 18, L)}</g>],
  ["Vertical 100% bar", <g>{R(18, 0, 18, 72, L)}{R(18, 72, 18, 27, D)}{R(64, 0, 18, 48, L)}{R(64, 48, 18, 51, D)}</g>],
  ["Waterfall chart", <g>{R(0, 30, 15, 69, D)}{R(18, 30, 15, 36, L)}{R(33, 62, 15, 12, L)}{R(42, 68, 22, 10, L)}{R(63, 8, 14, 70, L)}{R(81, 6, 15, 93, D)}</g>],
  ["Line chart", <g fill="none" strokeWidth="6"><path d="M2 86L34 59L58 62L96 33" stroke={L} /><path d="M2 64L34 28L56 43L96 14" stroke="#222" /></g>],
  ["Area line chart", <g><path d="M0 66L20 68L33 46L48 62L66 40L99 70V90H0Z" fill={L} /><path d="M18 66L34 46L50 58L34 78Z M80 52L99 10V72Z" fill={D} /></g>],
  ["Stacked area line", <g><path d="M0 84L33 52L66 62L99 24V90H0Z" fill={L} /><path d="M0 74L34 44L64 52L99 12V34L68 66L36 58L0 88Z" fill={D} /></g>],
  ["Clustered bar combo", <g>{R(2, 72, 18, 21, L)}{R(28, 58, 18, 35, D)}{R(54, 48, 18, 45, L)}{R(79, 27, 18, 66, D)}<path d="M10 64L34 30L58 40L85 9" fill="none" stroke="#222" strokeWidth="6" /></g>],
  ["Stacked bar combo", <g>{R(2, 72, 18, 15, L)}{R(2, 87, 18, 6, D)}{R(28, 58, 18, 20, L)}{R(28, 78, 18, 15, D)}{R(54, 48, 18, 36, L)}{R(54, 82, 18, 11, D)}{R(79, 27, 18, 30, L)}{R(79, 57, 18, 36, D)}<path d="M10 64L34 30L58 40L85 9" fill="none" stroke="#222" strokeWidth="6" /></g>],
  ["Box plot", <g fill="none" stroke="#333" strokeWidth="4"><path d="M30 31V43M30 61V73M24 31H36M24 73H36M22 43H38V61H22ZM66 17V28M66 57V79M60 17H72M60 79H72" /><path d="M58 28H75V57H58Z" fill={L} /></g>],
  ["Pivot table", <g>{cells((r, c) => (r === 0 && c === 0 ? null : r === 0 || c === 0 ? D : L))}</g>],
  ["Table", <g>{cells((r) => (r === 0 ? D : L))}</g>],
  ["Heat map", <g>{cells((r, c) => HEAT[r][c])}</g>],
  ["Tree map", <g>{R(0, 0, 58, 66, D)}{R(66, 0, 33, 48, L)}{R(66, 57, 33, 42, D)}{R(0, 75, 29, 24, L)}{R(37, 75, 21, 24, D)}</g>],
  ["Scatter plot", <g><g fill={L}><circle cx="8" cy="12" r="8.5" /><circle cx="91" cy="12" r="8.5" /><circle cx="33" cy="66" r="8.5" /><circle cx="62" cy="74" r="8.5" /></g><g fill={D}><circle cx="29" cy="37" r="8.5" /><circle cx="70" cy="41" r="8.5" /><circle cx="8" cy="87" r="8.5" /><circle cx="91" cy="87" r="8.5" /></g></g>],
  ["Histogram", <g>{R(7, 78, 14, 21, D)}{R(25, 18, 14, 81, D)}{R(43, 24, 14, 75, D)}{R(60, 63, 14, 36, D)}{R(78, 78, 14, 21, D)}</g>],
  ["Funnel chart", <g>{R(0, 0, 99, 15, D)}{R(8, 27, 84, 15, "#606060")}{R(24, 54, 52, 14, M)}{R(38, 81, 23, 14, L)}</g>],
  ["Sankey diagram", <g fill="none" strokeWidth="9"><path d="M14 24C40 24 60 50 87 76" stroke={L} /><path d="M14 44C40 40 60 70 87 62" stroke={M} /><path d="M14 34C40 30 50 50 87 46" stroke={L} /><path d="M14 72C50 72 50 26 87 24" stroke={M} /><path d="M14 60C50 60 50 40 87 38" stroke="#a5a5a5" /><path d="M36 36L64 62M38 60L62 40" stroke={D} strokeWidth="6" /></g>],
  ["Points on map", <g><g fill="none" stroke={L} strokeWidth="4"><path d="M8 24Q50 20 90 26M6 60H94M28 8Q22 50 28 92M68 8Q78 50 70 92" /></g><circle cx="28" cy="32" r="17" fill={L} /><circle cx="28" cy="76" r="12" fill={L} /><circle cx="80" cy="62" r="13" fill={D} /><circle cx="49.5" cy="49.5" r="46" fill="none" stroke={D} strokeWidth="6" /></g>],
  ["Filled map", <g><path d="M6 30L24 26L34 34L28 46L20 50L14 44L6 36ZM34 24H42L38 32ZM18 50L32 54L34 62L28 74L22 76Z" fill={M} /><path d="M44 30L60 24L92 28L90 36L82 38L80 48L70 50L62 46L54 42L46 44ZM42 50L56 46L62 52L58 66L52 74L46 62ZM78 64L90 62L90 70L86 74L78 68Z" fill="#333" /></g>, true],
  ["Radar chart", <g fill="none" strokeLinejoin="round"><path d="M49 5L95 40L78 90H20L3 40ZM49 5V50M95 40L49 50L78 90M20 90L49 50L3 40" stroke={L} strokeWidth="6" /><path d="M49 14L70 48L70 78L44 72L24 44Z" stroke="#333" strokeWidth="7" /></g>],
  ["Insight", <g><path d="M35 68Q34 58 26 48Q18 38 20 26A31 28 0 0 1 80 26Q82 38 74 48Q66 58 64 68Z" fill={D} /><path d="M56 10L34 40H46L42 62L64 30H52Z" fill="#fff" />{R(36, 74, 29, 7, D)}{R(36, 85, 29, 8, D)}{R(42, 93, 17, 6, D)}</g>],
  ["Word cloud", <g><path d="M14 78C-6 74-4 48 18 46C24 14 66 10 72 40C96 40 106 68 88 78Z" fill={D} /><text x="50" y="66" fill="#fff" fontSize="28" fontWeight="600" textAnchor="middle" fontFamily="Noto Sans">abc</text></g>],
  ["Custom visual content", <g>{R(0, 0, 99, 99, L)}{R(0, 0, 99, 16, D)}{R(8, 22, 83, 40, "#fff")}<path d="M12 60L32 36L46 48L64 32L88 60Z" fill={D} /><path d="M8 72H46M8 84H28M52 72H91M34 84H60M66 84H91" stroke="#fff" strokeWidth="6" /><path d="M70 4H77V11H70ZM84 4H91V11H84Z" fill="#fff" /></g>],
  ["Custom text", <g><rect y="6" width="90" height="90" rx="14" fill={D} /><path d="M14 32V20H78V32M46 20V82M33 82H59" fill="none" stroke="#fff" strokeWidth="7" /><circle cx="25" cy="58" r="13" fill={D} stroke="#fff" strokeWidth="4" /><path d="M17 58H33M25 50V66" stroke="#fff" strokeWidth="4" /><circle cx="87" cy="6" r="18" fill="#19719a" /></g>],
];

function VisualButton({ name, icon, selected }) {
  return (
    <button
      type="button"
      aria-label={name}
      aria-pressed={!!selected}
      className={
        selected
          ? "m-[3px] flex h-[45px] w-[45px] items-center justify-center border-[3px] border-[#219fda] bg-[#d3ecf8]"
          : "flex h-[51px] w-[51px] items-center justify-center"
      }
    >
      <svg viewBox="0 0 99 99" className="h-[33px] w-[33px] overflow-visible" aria-hidden="true">
        {icon}
      </svg>
    </button>
  );
}

/* ---------- Field wells ---------- */

function Well({ label, value, tone }) {
  const id = "well-" + label;
  const blue = tone === "blue";
  return (
    <div
      className={
        blue
          ? "flex h-[98px] w-[390px] flex-col rounded-[3px] border-[3px] border-[#219fda] bg-white pt-1 pr-2 pl-[7px]"
          : "flex h-[98px] w-[390px] flex-col rounded-[3px] border-[3px] border-[#2cad00] bg-white pt-1 pr-2 pl-[7px]"
      }
    >
      <label htmlFor={id} className="pb-2 text-sm leading-6 font-semibold text-[#444]">
        {label}
      </label>
      <div className="relative">
        <select
          id={id}
          className={
            blue
              ? "h-[47px] w-full appearance-none rounded-[3px] bg-[#219fda] px-[9px] text-[17px] text-white"
              : "h-[47px] w-full appearance-none rounded-[3px] bg-[#2cad00] px-[9px] text-[17px] text-white"
          }
        >
          <option>{value}</option>
        </select>
        <Chevron className="pointer-events-none absolute top-[18px] right-3 h-3 w-5 text-white" />
      </div>
    </div>
  );
}

/* ---------- Visual tile ---------- */

const HANDLES = [
  "-top-[6px] -left-[6px]",
  "-top-[6px] left-1/2 -ml-[5px]",
  "-top-[6px] -right-[6px]",
  "top-1/2 -left-[6px] -mt-[5px]",
  "top-1/2 -right-[6px] -mt-[5px]",
  "-bottom-[6px] -left-[6px]",
  "-bottom-[6px] left-1/2 -ml-[5px]",
  "-bottom-[6px] -right-[6px]",
];

function Tile() {
  return (
    <section className="relative w-[1182px] max-w-full border-[3px] border-[#141414] bg-white px-3 pb-3">
      {HANDLES.map((h) => (
        <span key={h} className={"absolute h-[10px] w-[10px] border border-[#141414] bg-white " + h} />
      ))}
      <div className="absolute top-[6px] right-[6px] flex h-9 w-32 items-center justify-between rounded-md border border-[#444] bg-white pr-2 pb-px pl-[5px] text-[#111] shadow-md">
        <button type="button" aria-label="Edit title"><Pencil className="h-[19px] w-5" sw={2} /></button>
        <button type="button" aria-label="Maximize">
          <Svg box="0 0 20 20" className="h-5 w-5" sw={2}>
            <path d="M12 8 L18.5 1.5 M12.5 1 H19 V7.5 M8 12 L1.5 18.5 M1 12.5 V19 H7.5" />
          </Svg>
        </button>
        <button type="button" aria-label="Map options">
          <Svg box="0 0 20 20" className="h-5 w-5" sw={1.8}>
            <path d="M10 19 Q2.5 12 2.5 7.5 A7.4 6.8 0 0 1 17.5 7.5 Q17.5 12 10 19Z" />
          </Svg>
        </button>
        <button type="button" aria-label="Menu" className="ml-1">
          <svg viewBox="0 0 20 20" className="h-5 w-5" aria-hidden="true">
            <circle cx="10" cy="2.4" r="2.2" /><circle cx="10" cy="10" r="2.2" /><circle cx="10" cy="17.6" r="2.2" />
          </svg>
        </button>
      </div>
      <h2 className="pt-[21px] pb-[15px] text-xl leading-7 text-[#16191f]">Sum of Temperaturehigh by Country/region</h2>
      <div className="flex gap-4">
        <div className="relative h-[698px] min-w-0 flex-1 overflow-hidden">
          <WorldMap />
          <p className="absolute bottom-0 left-0 rounded-r-[4px] bg-[#fffcff]/50 px-[7px] py-[7px] font-['Liberation_Sans',sans-serif] text-xs leading-4 text-[#111]">
            Esri, HERE, Garmin, FAO, NOAA, USGS, © OpenStreetMap contributors, and the GIS User Community
          </p>
          <div className="absolute right-2 bottom-2 flex flex-col gap-[3px] bg-[#ececec] p-[3px] text-[#333]">
            <button type="button" aria-label="Zoom in" className="flex h-11 w-[43px] items-center justify-center bg-white">
              <Svg box="0 0 18 18" className="h-[18px] w-[18px]" sw={4.4} strokeLinecap="round"><path d="M9 2.5 V15.5 M2.5 9 H15.5" /></Svg>
            </button>
            <button type="button" aria-label="Zoom out" className="flex h-10 w-[43px] items-center justify-center bg-white">
              <Svg box="0 0 18 18" className="h-[18px] w-[18px]" sw={4.4} strokeLinecap="round"><path d="M2.5 9 H15.5" /></Svg>
            </button>
          </div>
        </div>
        <div className="flex w-[134px] flex-col">
          <h3 className="truncate pb-3 text-xl leading-7 text-[#16191f]">Temperatur…</h3>
          <div className="flex flex-1 gap-[5px]">
            <div className="w-[18px] border border-[#c5cdd2] bg-linear-to-b from-[#219fda] to-[#ddf4ff]" />
            <div className="flex flex-col justify-between text-[17px] leading-7 text-[#16191f]">
              <span>334.85K</span>
              <span>-2.52K</span>
            </div>
          </div>
        </div>
      </div>
    </section>
  );
}

/* ---------- Page ---------- */

export default function App() {
  return (
    <div className="flex min-h-screen flex-col bg-white font-['Noto_Sans',sans-serif] text-[#16191f]">
      <div className="h-[2px] bg-[#4a5d78]" />
      <div className="h-[2px] bg-[#838a94]" />
      <header className="flex h-12 items-center border-b border-[#191919] bg-[#262626] pt-px pr-7 pl-[29px] text-white">
        <Logo />
        <span className="pl-3 text-[22px] leading-7">QuickSight</span>
        <span className="mx-4 h-6 w-px bg-[#555]" />
        <button type="button" aria-label="Favorite"><Star /></button>
        <h1 className="ml-1 w-[456px] border-b border-[#111] px-1 text-lg leading-[30px]">daily_weather_2020.csv analysis</h1>
        <button type="button" aria-label="Account" className="ml-auto"><User /></button>
      </header>

      <div className="flex h-15 items-center bg-[#19719a] pr-[19px] text-white">
        <button type="button" className="flex h-full items-center gap-2 border-r border-[#5c9cba] pr-5 pl-[29px] text-[17px]">
          <Svg box="0 0 20 20" className="h-5 w-5" sw={2}><path d="M10 0 V20 M0 10 H20" /></Svg>
          ADD
          <Chevron className="h-[9px] w-[15px]" sw={2} />
        </button>
        <button type="button" aria-label="Undo" className="ml-5"><Undo className="h-3 w-[21px]" /></button>
        <button type="button" aria-label="Redo" className="ml-[15px]"><Undo className="h-3 w-[21px] -scale-x-100 text-[#7fb2ca]" /></button>
        <span className="ml-auto text-[17px]">AUTOSAVE ON</span>
        <span className="mr-5 ml-[23px] h-12 w-px bg-[#6ea7c1]" />
        <div className="flex items-center gap-4">
          <button type="button" aria-label="Save"><Save /></button>
          <button type="button" aria-label="Export"><Export /></button>
          <button type="button" aria-label="Share"><Share /></button>
          <button type="button" aria-label="Fit to width"><FitWidth /></button>
        </div>
      </div>

      <div className="flex flex-1">
        <nav className="relative flex w-[106px] shrink-0 flex-col border-r border-[#dcdcdc] pt-6">
          <svg viewBox="0 0 9 24" className="absolute top-10 -right-px h-6 w-[9px]" aria-hidden="true">
            <path d="M9 0 L0.8 12 L9 24Z" fill="#fff" />
            <path d="M9 0 L0.8 12 L9 24" fill="none" stroke="#dcdcdc" />
          </svg>
          {["Visualize", "Filter", "Insights", "Parameters", "Actions", "Themes", "Settings"].map((n, i) => (
            <NavItem key={n} name={n} active={i === 0} />
          ))}
          <div className="mt-auto -mb-[25px]">
            <NavItem name="Community" />
          </div>
        </nav>

        <aside className="flex w-[390px] shrink-0 flex-col">
          <div className="flex flex-col border-b border-[#c8c8c8] pl-[18px]">
            <div className="flex items-center justify-between pt-3 pr-7 pb-1">
              <label htmlFor="dataset" className="text-[19px] leading-[30px]">Dataset</label>
              <button type="button" aria-label="Edit dataset" className="pb-2"><Pencil className="h-[19px] w-5 text-[#444]" sw={1.5} /></button>
            </div>
            <div className="flex items-center gap-3">
              <div className="relative flex h-[49px] w-[294px] items-center rounded-[3px] border border-[#c4c4c4] bg-[#eee]">
                <span className="mb-[3px] ml-2 flex h-[27px] w-[58px] shrink-0 items-center justify-center rounded-[3px] bg-[#ff9900] text-[15px] font-semibold text-white">SPICE</span>
                <select id="dataset" className="h-full min-w-0 flex-1 appearance-none bg-transparent pl-[6px] text-xl">
                  <option>daily_weather_…</option>
                </select>
                <Chevron className="pointer-events-none absolute top-[17px] right-[9px] h-3 w-5" sw={1.8} />
              </div>
              <span className="text-lg text-[#444]">100%</span>
            </div>
            <label htmlFor="search" className="pt-4 pb-1 text-[19px] leading-[30px]">Fields list</label>
            <div className="relative mr-[18px]">
              <input id="search" type="text" placeholder="Search fields" className="h-[46px] w-full rounded-[3px] border border-[#c4c4c4] px-[14px] font-['Open_Sans',sans-serif] text-xl italic placeholder:text-[#7d7d7d]" />
              <Svg box="0 0 20 20" className="absolute top-3 right-[14px] h-5 w-5 text-[#444]" sw={2}>
                <circle cx="8" cy="8" r="6" /><path d="M12 12.5 L18.5 19" />
              </Svg>
            </div>
            <div className="mr-[18px] flex">
              <ul className="-ml-px flex flex-1 flex-col gap-[3px] pt-1 pb-[9px]">
                {FIELDS.map(([name, kind, on]) => (
                  <li key={name}>
                    <button
                      type="button"
                      className={
                        on
                          ? "flex h-9 w-full items-center gap-3 rounded-[3px] bg-[#d4eecb] pl-2 text-[17px] text-[#444]"
                          : "flex h-9 w-full items-center gap-3 pl-2 text-[17px] text-[#444]"
                      }
                    >
                      <FieldIcon kind={kind} />
                      <span>{name}</span>
                    </button>
                  </li>
                ))}
              </ul>
              <div className="mt-3 flex w-[23px] flex-col items-center bg-[#fbfbfb] pt-[7px] pb-[6px] text-[#8b8b8b]">
                <svg viewBox="0 0 14 11" className="h-[11px] w-[14px]" fill="currentColor" aria-hidden="true"><path d="M7 0.5 Q8 0.5 8.8 2 L14 9 Q14 10.6 12.5 10.6 H1.5 Q0 10.6 0 9 L5.2 2 Q6 0.5 7 0.5Z" /></svg>
                <div className="grow-[340]" />
                <div className="h-[201px] w-[13px] rounded-full bg-[#8b8b8b]" />
                <div className="grow-[46]" />
                <svg viewBox="0 0 14 11" className="h-[11px] w-[14px]" fill="currentColor" aria-hidden="true"><path d="M7 10.5 Q8 10.5 8.8 9 L14 2 Q14 0.4 12.5 0.4 H1.5 Q0 0.4 0 2 L5.2 9 Q6 10.5 7 10.5Z" /></svg>
              </div>
            </div>
          </div>

          <div className="flex-1 pb-2">
            <div className="flex items-center justify-between pt-4 pr-[31px] pb-2 pl-[18px]">
              <h2 className="text-[19px] leading-7">Visual types</h2>
              <button type="button" aria-label="Collapse visual types"><Chevron className="h-[10px] w-4" sw={1.8} /></button>
            </div>
            <div className="ml-[15px] grid w-[357px] grid-cols-7 pt-[5px]">
              {VISUALS.map(([name, icon, selected]) => (
                <VisualButton key={name} name={name} icon={icon} selected={selected} />
              ))}
            </div>
          </div>
        </aside>

        <main className="flex min-w-0 flex-1 flex-col bg-[#f5f5f5]">
          <section className="border-b border-[#c8c8c8] pb-[30px]">
            <div className="flex items-center justify-between pt-4 pr-4 pb-[31px] pl-[14px]">
              <h2 className="text-[19px] leading-7 text-[#444]">Field wells</h2>
              <button type="button" aria-label="Collapse field wells"><Chevron className="mt-2 h-3 w-5 -scale-y-100 text-[#333]" sw={1.8} /></button>
            </div>
            <div className="flex flex-wrap gap-[30px] pl-[30px]">
              <Well label="Location" value="Country/Region" tone="blue" />
              <Well label="Color" value="temperatureHigh (Sum)" tone="green" />
            </div>
          </section>

          <div className="flex h-[57px] items-end bg-white">
            <div className="h-full w-[7px] border-b border-[#dcdcdc]" />
            <button type="button" className="flex h-[49px] w-[123px] items-center justify-between border border-b-0 border-[#d5d5d5] bg-[#f5f5f5] pr-[5px] pl-[15px] text-lg font-bold text-black">
              Sheet 1
              <Chevron className="h-3 w-5 text-[#555]" />
            </button>
            <div className="flex h-full flex-1 items-center border-b border-[#dcdcdc] pt-2 pl-[14px] text-[#777]">
              <button type="button" aria-label="Add sheet">
                <Svg box="0 0 20 20" className="h-5 w-5" sw={2}><path d="M10 0 V20 M0 10 H20" /></Svg>
              </button>
            </div>
          </div>

          <div className="flex flex-1">
            <div className="min-w-0 flex-1 pt-3 pl-3">
              <Tile />
            </div>
            <div className="flex w-[11px] flex-col">
              <div className="grow-[816] rounded-full bg-[#a3a3a3]" />
              <div className="grow-[66]" />
            </div>
          </div>
          <div className="flex h-[11px]">
            <div className="grow-[1766] rounded-full bg-[#a3a3a3]" />
            <div className="grow-[298]" />
          </div>
        </main>
      </div>
      <div className="h-[2px] bg-[#4b525c]" />
    </div>
  );
}
